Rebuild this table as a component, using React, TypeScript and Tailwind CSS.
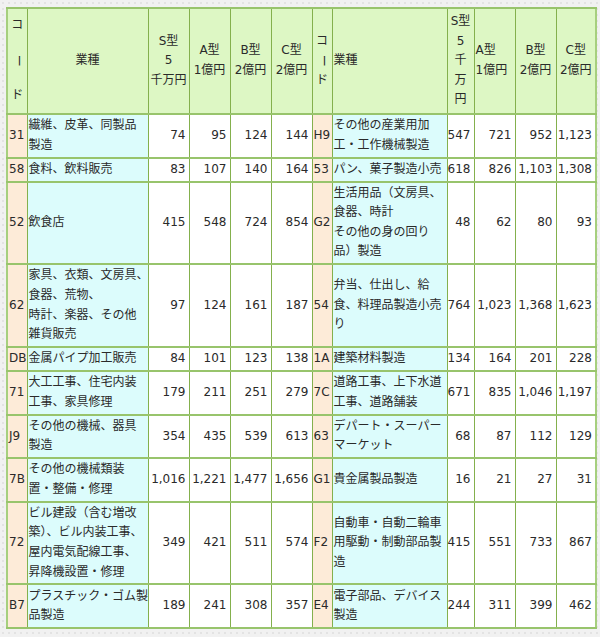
import React from "react"

type Half = { code: string; lines: string[]; v: string[] }
type Row = { l: Half; r: Half }

const rows: Row[] = [
  {
    l: { code: "31", lines: ["繊維、皮革、同製品", "製造"], v: ["74", "95", "124", "144"] },
    r: { code: "H9", lines: ["その他の産業用加", "工・工作機械製造"], v: ["547", "721", "952", "1,123"] },
  },
  {
    l: { code: "58", lines: ["食料、飲料販売"], v: ["83", "107", "140", "164"] },
    r: { code: "53", lines: ["パン、菓子製造小売"], v: ["618", "826", "1,103", "1,308"] },
  },
  {
    l: { code: "52", lines: ["飲食店"], v: ["415", "548", "724", "854"] },
    r: {
      code: "G2",
      lines: ["生活用品（文房具、", "食器、時計", "その他の身の回り", "品）製造"],
      v: ["48", "62", "80", "93"],
    },
  },
  {
    l: {
      code: "62",
      lines: ["家具、衣類、文房具、", "食器、荒物、", "時計、楽器、その他", "雑貨販売"],
      v: ["97", "124", "161", "187"],
    },
    r: {
      code: "54",
      lines: ["弁当、仕出し、給", "食、料理品製造小売", "り"],
      v: ["764", "1,023", "1,368", "1,623"],
    },
  },
  {
    l: { code: "DB", lines: ["金属パイプ加工販売"], v: ["84", "101", "123", "138"] },
    r: { code: "1A", lines: ["建築材料製造"], v: ["134", "164", "201", "228"] },
  },
  {
    l: { code: "71", lines: ["大工工事、住宅内装", "工事、家具修理"], v: ["179", "211", "251", "279"] },
    r: { code: "7C", lines: ["道路工事、上下水道", "工事、道路舗装"], v: ["671", "835", "1,046", "1,197"] },
  },
  {
    l: { code: "J9", lines: ["その他の機械、器具", "製造"], v: ["354", "435", "539", "613"] },
    r: { code: "63", lines: ["デパート・スーパー", "マーケット"], v: ["68", "87", "112", "129"] },
  },
  {
    l: { code: "7B", lines: ["その他の機械類装", "置・整備・修理"], v: ["1,016", "1,221", "1,477", "1,656"] },
    r: { code: "G1", lines: ["貴金属製品製造"], v: ["16", "21", "27", "31"] },
  },
  {
    l: {
      code: "72",
      lines: ["ビル建設（含む増改", "築）、ビル内装工事、", "屋内電気配線工事、", "昇降機設置・修理"],
      v: ["349", "421", "511", "574"],
    },
    r: {
      code: "F2",
      lines: ["自動車・自動二輪車", "用駆動・制動部品製", "造"],
      v: ["415", "551", "733", "867"],
    },
  },
  {
    l: { code: "B7", lines: ["プラスチック・ゴム製", "品製造"], v: ["189", "241", "308", "357"] },
    r: { code: "E4", lines: ["電子部品、デバイス", "製造"], v: ["244", "311", "399", "462"] },
  },
]

const widths = [20, 121, 41, 41, 41, 41, 20, 115, 27, 41, 41, 40]

const cell = "border-x border-x-[#84b04d] border-y-2 border-y-[#98c46c] align-middle"
const head = `${cell} bg-[#ddf7c4] py-[3px] px-[1px] font-normal`
const codeCls = `${cell} bg-[#fdebd8] px-[1px] py-[1.2px] text-left`
const typeCls = `${cell} bg-[#dcfcfc] pl-[1px] pr-0 py-[1.2px] text-left whitespace-nowrap`
const numCls = `${cell} bg-white pl-0 pr-[3px] py-[1.2px] text-right`

function Lines({ items }: { items: string[] }) {
  return (
    <>
      {items.map((t, i) => (
        <div key={i}>{t}</div>
      ))}
    </>
  )
}

function Dash() {
  return <span className="inline-block rotate-90">ー</span>
}

export default function App() {
  return (
    <div className="min-h-[637px] w-[600px] bg-[#f1f1f1] bg-[radial-gradient(circle,#e3e3e3_1px,transparent_1.5px)] bg-[length:6px_6px] pl-[6px] pt-[7px] font-['DejaVu_Sans','Noto_Sans_CJK_JP',sans-serif] text-[12px] leading-[19.6px] text-[#2a2a2a]">
      <table className="w-[589px] table-fixed border-collapse border-2 border-[#a6cf7e]">
        <colgroup>
          {widths.map((w, i) => (
            <col key={i} style={{ width: w }} />
          ))}
        </colgroup>
        <thead>
          <tr>
            <th className={head}>
              <div className="flex h-[90px] flex-col items-center justify-between">
                <span>コ</span>
                <Dash />
                <span>ド</span>
              </div>
            </th>
            <th className={`${head} text-center`}>業種</th>
            <th className={`${head} text-center`}>
              <Lines items={["S型", "5", "千万円"]} />
            </th>
            <th className={`${head} text-center`}>
              <Lines items={["A型", "1億円"]} />
            </th>
            <th className={`${head} text-center`}>
              <Lines items={["B型", "2億円"]} />
            </th>
            <th className={`${head} text-center`}>
              <Lines items={["C型", "2億円"]} />
            </th>
            <th className={head}>
              <div className="flex flex-col items-center">
                <span>コ</span>
                <Dash />
                <span>ド</span>
              </div>
            </th>
            <th className={`${head} text-left`}>業種</th>
            <th className={`${head} text-center`}>
              <Lines items={["S型", "5", "千", "万", "円"]} />
            </th>
            <th className={`${head} text-left`}>
              <Lines items={["A型", "1億円"]} />
            </th>
            <th className={`${head} text-center`}>
              <Lines items={["B型", "2億円"]} />
            </th>
            <th className={`${head} text-center`}>
              <Lines items={["C型", "2億円"]} />
            </th>
          </tr>
        </thead>
        <tbody>
          {rows.map((r, ri) => (
            <tr key={ri}>
              {[r.l, r.r].map((h, hi) => (
                <React.Fragment key={hi}>
                  <td className={codeCls}>{h.code}</td>
                  <td className={typeCls}>
                    <Lines items={h.lines} />
                  </td>
                  {h.v.map((n, i) => (
                    <td key={i} className={numCls}>
                      {n}
                    </td>
                  ))}
                </React.Fragment>
              ))}
            </tr>
          ))}
        </tbody>
      </table>
    </div>
  )
}
